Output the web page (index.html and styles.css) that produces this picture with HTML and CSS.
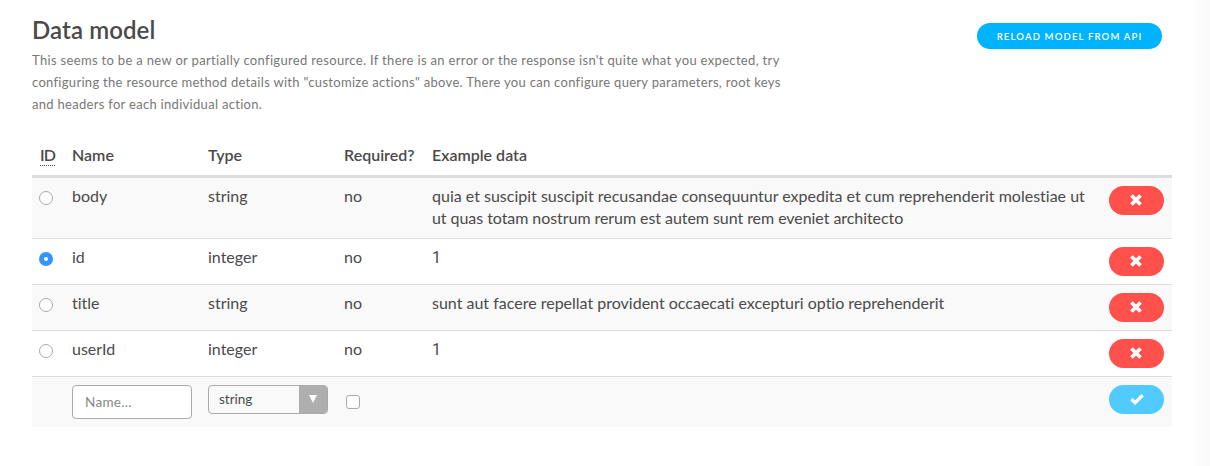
FILE: index.html
```html
<!DOCTYPE html>
<html lang="en">
<head>
<meta charset="utf-8">
<title>Data model</title>
<link rel="stylesheet" href="styles.css">
</head>
<body>
<svg class="sprite" aria-hidden="true">
  <symbol id="cross" viewBox="0 0 12 12"><path d="M1.5 1.5 10.5 10.5M10.5 1.5 1.5 10.5" fill="none" stroke="#fff" stroke-width="3.7"/></symbol>
  <symbol id="check" viewBox="0 0 14 12"><path d="M1.3 6 5.1 9.7 12.7 2.1" fill="none" stroke="#fff" stroke-width="3.4"/></symbol>
</svg>
<main class="panel">
  <header class="heading">
    <div class="intro">
      <h1 class="title">Data model</h1>
      <p class="description"><span class="lead">This seems to be a new or partially configured resource. If there is an error or the response isn't quite what you expected, try</span><br>configuring the resource method details with "customize actions" above. There you can configure query parameters, root keys<br>and headers for each individual action.</p>
    </div>
    <button class="reload">RELOAD MODEL FROM API</button>
  </header>
  <table class="model">
    <colgroup><col class="c-id"><col class="c-name"><col class="c-type"><col class="c-req"><col><col class="c-act"></colgroup>
    <thead>
      <tr><th><span class="abbr">ID</span></th><th>Name</th><th>Type</th><th>Required?</th><th>Example data</th><th></th></tr>
    </thead>
    <tbody>
      <tr><td><span class="radio"></span></td><td class="text">body</td><td class="text">string</td><td class="text">no</td><td class="text">quia et suscipit suscipit recusandae consequuntur expedita et cum reprehenderit molestiae ut<br><span class="tight">ut quas totam nostrum rerum est autem sunt rem eveniet architecto</span></td><td><button class="pill"><svg class="cross"><use href="#cross"/></svg></button></td></tr>
      <tr><td><span class="radio checked"></span></td><td class="text">id</td><td class="text">integer</td><td class="text">no</td><td class="number">1</td><td><button class="pill"><svg class="cross"><use href="#cross"/></svg></button></td></tr>
      <tr><td><span class="radio"></span></td><td class="text">title</td><td class="text">string</td><td class="text">no</td><td class="text">sunt aut facere repellat provident occaecati excepturi optio reprehenderit</td><td><button class="pill"><svg class="cross"><use href="#cross"/></svg></button></td></tr>
      <tr><td><span class="radio"></span></td><td class="text">userId</td><td class="text">integer</td><td class="text">no</td><td class="number">1</td><td><button class="pill"><svg class="cross"><use href="#cross"/></svg></button></td></tr>
      <tr><td></td><td><input class="name" type="text" placeholder="Name..."></td><td><div class="select"><span class="value">string</span><span class="arrow"><svg width="8" height="8" viewBox="0 0 8 8"><path d="M0 0H8L4 8Z" fill="#fff"/></svg></span></div></td><td><span class="checkbox"></span></td><td></td><td><button class="pill add"><svg class="check"><use href="#check"/></svg></button></td></tr>
    </tbody>
  </table>
</main>
</body>
</html>
```
FILE: styles.css
```css
* { box-sizing: border-box; }
body {
  margin: 0;
  height: 466px;
  overflow: hidden;
  background: linear-gradient(to right, #fff 1190px, #f9f9f9 1210px);
  color: #4a4a4a;
  font: 16px/22px Lato, "Liberation Sans", sans-serif;
  font-variant-ligatures: none;
}
.sprite { display: none; }
.panel { width: 1140px; margin-left: 32px; padding-top: 17px; }
.heading { display: flex; justify-content: space-between; height: 120px; padding-right: 10px; }
.title { margin: -1px 0 0; font-size: 24px; line-height: 27px; font-weight: 600; letter-spacing: 0.1px; }
.description { margin: 6px 0 0; font-size: 13px; line-height: 22px; color: #777; white-space: nowrap; letter-spacing: 0.3px; }
.lead { letter-spacing: 0.33px; }
.reload {
  width: 185px; height: 26px; margin: 6px 0 0; padding: 1px 0 0; border: 0; border-radius: 13px;
  background: #00b3ff; color: #fff; font: 600 9.5px/25px Lato, sans-serif; letter-spacing: 1.18px;
}
.model { width: 100%; table-layout: fixed; border-collapse: separate; border-spacing: 0; }
.c-id { width: 32px; }
.c-name, .c-type { width: 136px; }
.c-req { width: 88px; }
.c-act { width: 71px; }
th, td { padding: 8px; text-align: left; vertical-align: top; white-space: nowrap; }
th { height: 41px; padding: 7px 8px 9px; font-weight: 600; font-size: 16px; border-bottom: 3px solid #ddd; }
td { border-bottom: 1px solid #ddd; }
.text { padding: 7px 8px 9px; }
.tight { letter-spacing: -0.06px; }
.number { font-family: Roboto, sans-serif; }
tbody tr:nth-child(odd) { background: #f9f9f9; }
tbody tr:last-child td { border-bottom: 0; }
.abbr { display: block; width: 15px; height: 22px; border-bottom: 1px dotted #4a4a4a; letter-spacing: -0.8px; }
.radio { display: block; width: 14px; height: 14px; margin: 5px 0 0 -1px; border: 1px solid #aaa; border-radius: 50%; background: #fff; }
.radio.checked { border: 5px solid #3395ff; }
.pill { display: flex; align-items: center; justify-content: center; width: 55px; height: 29px; padding: 0 0 1px; border: 0; border-radius: 14.5px; background: #ff504c; }
.pill.add { background: #50caff; }
.cross { width: 12px; height: 12px; margin-right: 1px; }
.check { width: 14px; height: 12px; }
.name { display: block; width: 120px; height: 34px; padding: 0 12px; border: 1px solid #aaa; border-radius: 4px; background: #fff; font: 13.5px Lato, sans-serif; letter-spacing: 0.3px; }
.name::placeholder { color: #888; }
.select { display: flex; width: 120px; height: 29px; overflow: hidden; border: 1px solid #aaa; border-radius: 4px; font-size: 13.5px; line-height: 26px; }
.value { flex: 1; padding-left: 10px; }
.arrow { display: flex; width: 28px; padding: 9px 0 0 10px; background: #aeaeae; }
.checkbox { display: block; width: 14px; height: 14px; margin: 10px 0 0 2px; border: 1px solid #aaa; border-radius: 3px; background: #fff; }
```
